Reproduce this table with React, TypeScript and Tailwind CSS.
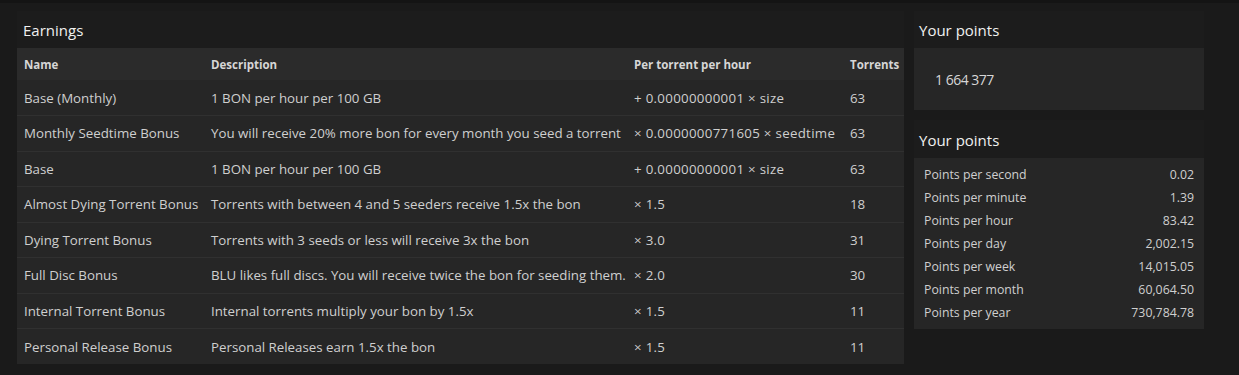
import React from 'react';

type Earning = {
  name: string;
  description: string;
  rate: string;
  torrents: number;
};

const earnings: Earning[] = [
  { name: 'Base (Monthly)', description: '1 BON per hour per 100 GB', rate: '+ 0.00000000001 × size', torrents: 63 },
  { name: 'Monthly Seedtime Bonus', description: 'You will receive 20% more bon for every month you seed a torrent', rate: '× 0.0000000771605 × seedtime', torrents: 63 },
  { name: 'Base', description: '1 BON per hour per 100 GB', rate: '+ 0.00000000001 × size', torrents: 63 },
  { name: 'Almost Dying Torrent Bonus', description: 'Torrents with between 4 and 5 seeders receive 1.5x the bon', rate: '× 1.5', torrents: 18 },
  { name: 'Dying Torrent Bonus', description: 'Torrents with 3 seeds or less will receive 3x the bon', rate: '× 3.0', torrents: 31 },
  { name: 'Full Disc Bonus', description: 'BLU likes full discs. You will receive twice the bon for seeding them.', rate: '× 2.0', torrents: 30 },
  { name: 'Internal Torrent Bonus', description: 'Internal torrents multiply your bon by 1.5x', rate: '× 1.5', torrents: 11 },
  { name: 'Personal Release Bonus', description: 'Personal Releases earn 1.5x the bon', rate: '× 1.5', torrents: 11 },
];

const rates: [string, string][] = [
  ['Points per second', '0.02'],
  ['Points per minute', '1.39'],
  ['Points per hour', '83.42'],
  ['Points per day', '2,002.15'],
  ['Points per week', '14,015.05'],
  ['Points per month', '60,064.50'],
  ['Points per year', '730,784.78'],
];

function PanelTitle({ children, className = '' }: { children: React.ReactNode; className?: string }) {
  return (
    <h2 className={`h-[37px] flex items-center pt-[2px] text-[15px] text-[#f0f0f0] font-normal ${className}`}>
      {children}
    </h2>
  );
}

export default function App() {
  return (
    <div
      className="min-h-[375px] bg-[#1a1a1a] border-t-[3px] border-[#141414] text-[13.3px] text-[#cfcfcf]"
      style={{ fontFamily: '"Open Sans", "Noto Sans", sans-serif' }}
    >
      <div className="flex gap-[10px] pl-[17px] pt-[8px]">
        {/* Earnings */}
        <section className="w-[887px] bg-[#1c1c1c]">
          <PanelTitle className="pl-[6px]">Earnings</PanelTitle>
          <table className="w-full table-fixed bg-[#262626] border-collapse">
            <colgroup>
              <col className="w-[187px]" />
              <col className="w-[423px]" />
              <col className="w-[216px]" />
              <col className="w-[61px]" />
            </colgroup>
            <thead>
              <tr className="h-[32px] bg-[#2b2b2b] text-left text-[11.5px] font-bold text-[#d6d6d6]">
                <th className="pl-[7px] pt-[2px]">Name</th>
                <th className="pl-[7px] pt-[2px]">Description</th>
                <th className="pl-[7px] pt-[2px]">Per torrent per hour</th>
                <th className="pl-[7px] pt-[2px] whitespace-nowrap">Torrents</th>
              </tr>
            </thead>
            <tbody>
              {earnings.map((e, i) => (
                <tr key={i} className={`h-[35.5px] ${i > 0 ? 'border-t border-[#303030]' : ''}`}>
                  <td className="pl-[7px] pt-[2px] whitespace-nowrap">{e.name}</td>
                  <td className="pl-[7px] pt-[2px] whitespace-nowrap">{e.description}</td>
                  <td className="pl-[7px] pt-[2px] whitespace-nowrap tracking-[0.3px]">{e.rate}</td>
                  <td className="pl-[7px] pt-[2px]">{e.torrents}</td>
                </tr>
              ))}
            </tbody>
          </table>
        </section>

        {/* Points */}
        <aside className="w-[290px] flex flex-col gap-[10px]">
          <section className="bg-[#1c1c1c]">
            <PanelTitle className="pl-[5px]">Your points</PanelTitle>
            <div className="h-[62px] bg-[#262626] flex items-center pl-[21px] text-[14px] tracking-[-0.5px] text-[#d6d6d6]">
              1 664 377
            </div>
          </section>
          <section className="bg-[#1c1c1c]">
            <PanelTitle className="pl-[5px] h-[38px]">Your points</PanelTitle>
            <dl className="bg-[#262626] pt-[6px] pb-[4px] px-[10px] text-[12.3px]">
              {rates.map(([label, value]) => (
                <div key={label} className="h-[23px] flex items-center justify-between">
                  <dt>{label}</dt>
                  <dd>{value}</dd>
                </div>
              ))}
            </dl>
          </section>
        </aside>
      </div>
    </div>
  );
}
